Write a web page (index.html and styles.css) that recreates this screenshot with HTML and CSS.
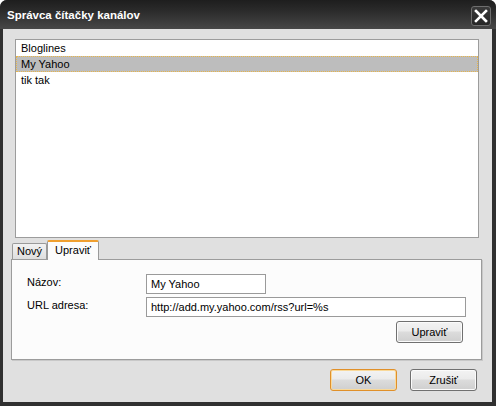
FILE: index.html
```html
<!DOCTYPE html>
<html>
<head>
<meta charset="utf-8">
<link rel="stylesheet" href="styles.css">
</head>
<body>
<div class="window">
  <div class="titlebar">
    <span class="title">Správca čítačky kanálov</span>
    <span class="close"><svg width="14" height="14" viewBox="0 0 14 14"><path d="M2 2 L12 12 M12 2 L2 12" stroke="#fff" stroke-width="2.6" stroke-linecap="square"/></svg></span>
  </div>
  <div class="client">
    <div class="list">
      <div class="item">Bloglines</div>
      <div class="item selected">My Yahoo</div>
      <div class="item">tik tak</div>
    </div>
    <div class="tabs">
      <div class="tab">Nový</div>
      <div class="tab active">Upraviť</div>
    </div>
    <div class="panel">
      <div class="form">
        <label class="lbl">Názov:</label>
        <div class="input short">My Yahoo</div>
        <label class="lbl">URL adresa:</label>
        <div class="input long">http://add.my.yahoo.com/rss?url=%s</div>
      </div>
      <div class="panel-actions">
        <button class="btn">Upraviť</button>
      </div>
    </div>
    <div class="actions">
      <button class="btn default">OK</button>
      <button class="btn">Zrušiť</button>
    </div>
  </div>
</div>
</body>
</html>
```
FILE: styles.css
```css
html, body {
  margin: 0;
  padding: 0;
  background: #ffffff;
}
body {
  font-family: "Liberation Sans", Arial, sans-serif;
  font-size: 11px;
  color: #000;
}
.window {
  width: 496px;
  height: 406px;
  background: #303030;
  border-radius: 7px 7px 0 0;
  display: flex;
  flex-direction: column;
  overflow: hidden;
}
.titlebar {
  height: 29px;
  flex: none;
  background: linear-gradient(#1e1e1e, #2c2c2c 40%, #474747);
  display: flex;
  align-items: center;
  justify-content: space-between;
  padding: 0 5px 0 7px;
  box-sizing: border-box;
}
.title {
  color: #fff;
  font-weight: bold;
  font-size: 11.5px;
  padding-top: 1px;
}
.close {
  width: 18px;
  height: 18px;
  border: 1px solid #6e6e6e;
  border-radius: 3px;
  background: linear-gradient(#3a3a3a, #262626);
  display: flex;
  align-items: center;
  justify-content: center;
  margin-top: 2px;
}
.client {
  flex: 1;
  margin: 0 4px 4px 3px;
  background: #e0e0e0;
  display: flex;
  flex-direction: column;
}
.list {
  margin: 10px 13px 0 12px;
  height: 199px;
  box-sizing: border-box;
  background: #fff;
  border: 1px solid #9c9c9c;
}
.item {
  height: 16px;
  line-height: 14px;
  padding-left: 4px;
  box-sizing: border-box;
  border: 1px dotted transparent;
}
.item.selected {
  background: #bdbdbd;
  border: 1px dotted #e9b64a;
}
.tabs {
  display: flex;
  align-items: flex-end;
  margin: 2px 0 0 9px;
  height: 19px;
  position: relative;
  z-index: 1;
}
.tab {
  height: 15px;
  line-height: 15px;
  padding: 0 4px;
  background: linear-gradient(#f2f2f2, #dedede);
  border: 1px solid #9a9a9a;
  border-bottom: none;
  border-radius: 2px 2px 0 0;
}
.tab.active {
  line-height: 17px;
  padding: 0 7px;
  background: #fcfcfc;
  border-top: 2px solid #f0a030;
  margin-bottom: -1px;
  box-sizing: border-box;
  height: 20px;
}
.panel {
  margin: 0 0 0 8px;
  width: 471px;
  height: 101px;
  box-sizing: border-box;
  background: #fcfcfc;
  border: 1px solid #9c9c9c;
  box-shadow: 1px 1px 0 #c8c8c8;
  padding: 14px 17px 0 15px;
}
.form {
  display: grid;
  grid-template-columns: 119px auto;
  row-gap: 3px;
  align-items: center;
}
.lbl {
  padding-bottom: 4px;
}
.input {
  height: 20px;
  box-sizing: border-box;
  border: 1px solid #9a9a9a;
  background: #fff;
  line-height: 18px;
  padding-left: 4px;
}
.input.short { width: 120px; }
.input.long { width: 320px; }
.panel-actions {
  display: flex;
  justify-content: flex-end;
  margin-top: 4px;
  padding-right: 1px;
}
.btn {
  font-family: "Liberation Sans", Arial, sans-serif;
  font-size: 11px;
  color: #000;
  width: 67px;
  height: 22px;
  box-sizing: border-box;
  border: 1px solid #707070;
  border-radius: 3px;
  background: linear-gradient(#f3f3f3, #ebebeb 45%, #dcdcdc 50%, #cfcfcf);
  box-shadow: inset 0 0 0 1px #fbfbfb;
  padding: 0;
}
.btn.default {
  border-color: #e0902a;
  box-shadow: inset 0 0 0 1px #f9d99a;
}
.actions {
  display: flex;
  justify-content: flex-end;
  gap: 13px;
  margin: 9px 15px 0 0;
}
```
